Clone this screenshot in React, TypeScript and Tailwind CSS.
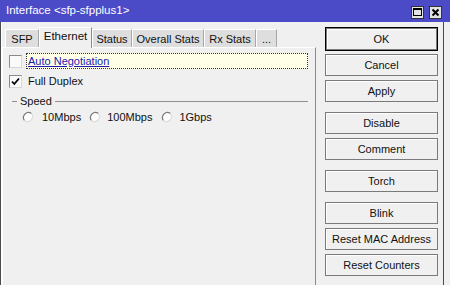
import React from "react";

const tabs = [
  { label: "SFP", w: "w-[34px]" },
  { label: "Ethernet", w: "w-[53px]", active: true },
  { label: "Status", w: "w-[40px]" },
  { label: "Overall Stats", w: "w-[72px]" },
  { label: "Rx Stats", w: "w-[52px]" },
  { label: "...", w: "w-[21px]" },
];

const Btn = ({ label, className = "" }: { label: string; className?: string }) => (
  <div
    className={`h-[22px] flex items-center justify-center border border-[#7a7a7a] bg-[#f0f0f0] shadow-[inset_1px_1px_0_#ffffff] ${className}`}
  >
    {label}
  </div>
);

const Check = ({ checked }: { checked?: boolean }) => (
  <div className="w-[13px] h-[13px] bg-[#fafafa] border border-t-[#8a8a8a] border-l-[#8a8a8a] border-r-[#d8d8d8] border-b-[#d8d8d8] flex items-center justify-center">
    {checked && (
      <svg width="9" height="9" viewBox="0 0 9 9">
        <path d="M1 4.5 L3.3 7 L8 1.5" fill="none" stroke="#000" strokeWidth="1.8" />
      </svg>
    )}
  </div>
);

const Radio = () => (
  <svg width="12" height="12" viewBox="0 0 12 12">
    <circle cx="6" cy="6" r="5" fill="#ffffff" />
    <path d="M9.5 2.5 A5 5 0 0 0 2.5 9.5" fill="none" stroke="#7a7a7a" strokeWidth="1.2" />
    <path d="M2.5 9.5 A5 5 0 0 0 9.5 2.5" fill="none" stroke="#dcdcdc" strokeWidth="1.2" />
  </svg>
);

export default function App() {
  return (
    <div className="w-[450px] h-[285px] overflow-hidden bg-[#f0f0f0] text-[11px] text-[#111] font-['Liberation_Sans',Arial,sans-serif] flex flex-col">
      {/* title bar */}
      <div className="h-[22px] shrink-0 bg-[#4b4bc8] flex items-center pl-[6px] pr-[8px] text-white text-[11.5px]">
        <span>Interface &lt;sfp-sfpplus1&gt;</span>
        <div className="ml-auto flex gap-[5px] pt-[2px]">
          <div className="w-[13px] h-[13px] bg-[#e4e4e4] border border-[#333] flex items-center justify-center">
            <div className="w-[9px] h-[8px] border border-black border-t-2" />
          </div>
          <div className="w-[13px] h-[13px] bg-[#e4e4e4] border border-[#333] flex items-center justify-center">
            <svg width="9" height="9" viewBox="0 0 9 9">
              <path d="M1.5 1.5 L7.5 7.5 M7.5 1.5 L1.5 7.5" stroke="#000" strokeWidth="2" />
            </svg>
          </div>
        </div>
      </div>

      {/* body */}
      <div className="flex-1 flex border-l border-[#4a4a4a] pr-[3px]">
        {/* left side: tabs + panel */}
        <div className="w-[315px] flex flex-col pt-[5px] border-l border-white">
          <div className="h-[20px] flex items-end pl-[3px] relative z-10">
            {tabs.map((t) =>
              t.active ? (
                <div
                  key={t.label}
                  className={`${t.w} h-[21px] -mb-[1px] bg-[#f0f0f0] border-t border-l border-white border-r border-r-[#8a8a8a] flex items-center justify-center text-[11.5px] pb-[2px]`}
                >
                  {t.label}
                </div>
              ) : (
                <div
                  key={t.label}
                  className={`${t.w} h-[18px] bg-[#dedede] border-t border-l border-white border-r border-r-[#a8a8a8] flex items-center justify-center pt-[1px]`}
                >
                  {t.label}
                </div>
              )
            )}
          </div>
          <div className="flex-1 border-t border-l border-white border-r border-r-[#8a8a8a] pl-[6px] pr-[7px] pt-[5px]">
            <div className="h-[16px] flex items-center gap-[4px]">
              <Check />
              <div className="flex-1 h-[16px] bg-[#ffffe8] border border-dotted border-[#333] flex items-center pl-[1px]">
                <span className="text-[#1a1ab0] underline underline-offset-[1px]">Auto Negotiation</span>
              </div>
            </div>
            <div className="h-[14px] mt-[5px] flex items-center gap-[6px]">
              <Check checked />
              <span>Full Duplex</span>
            </div>
            <div className="mt-[6px] h-[14px] flex items-center gap-[3px] pl-[3px]">
              <div className="w-[5px] h-px bg-[#909090]" />
              <span>Speed</span>
              <div className="flex-1 h-px bg-[#909090]" />
            </div>
            <div className="mt-[2px] h-[14px] flex items-center pl-[13px]">
              <Radio />
              <span className="ml-[8px]">10Mbps</span>
              <span className="ml-[8px]"><Radio /></span>
              <span className="ml-[6px]">100Mbps</span>
              <span className="ml-[9px]"><Radio /></span>
              <span className="ml-[6px]">1Gbps</span>
            </div>
          </div>
        </div>

        {/* right side: buttons */}
        <div className="w-[128px] flex flex-col pl-[9px] pr-[5px] pt-[5px] border-r border-[#4a4a4a]">
          <div className="border border-black">
            <Btn label="OK" className="border-[#3a3a3a]" />
          </div>
          <Btn label="Cancel" className="mt-[3px]" />
          <Btn label="Apply" className="mt-[4px]" />
          <Btn label="Disable" className="mt-[10px]" />
          <Btn label="Comment" className="mt-[4px]" />
          <Btn label="Torch" className="mt-[10px]" />
          <Btn label="Blink" className="mt-[10px]" />
          <Btn label="Reset MAC Address" className="mt-[4px]" />
          <Btn label="Reset Counters" className="mt-[4px]" />
        </div>
      </div>
    </div>
  );
}
